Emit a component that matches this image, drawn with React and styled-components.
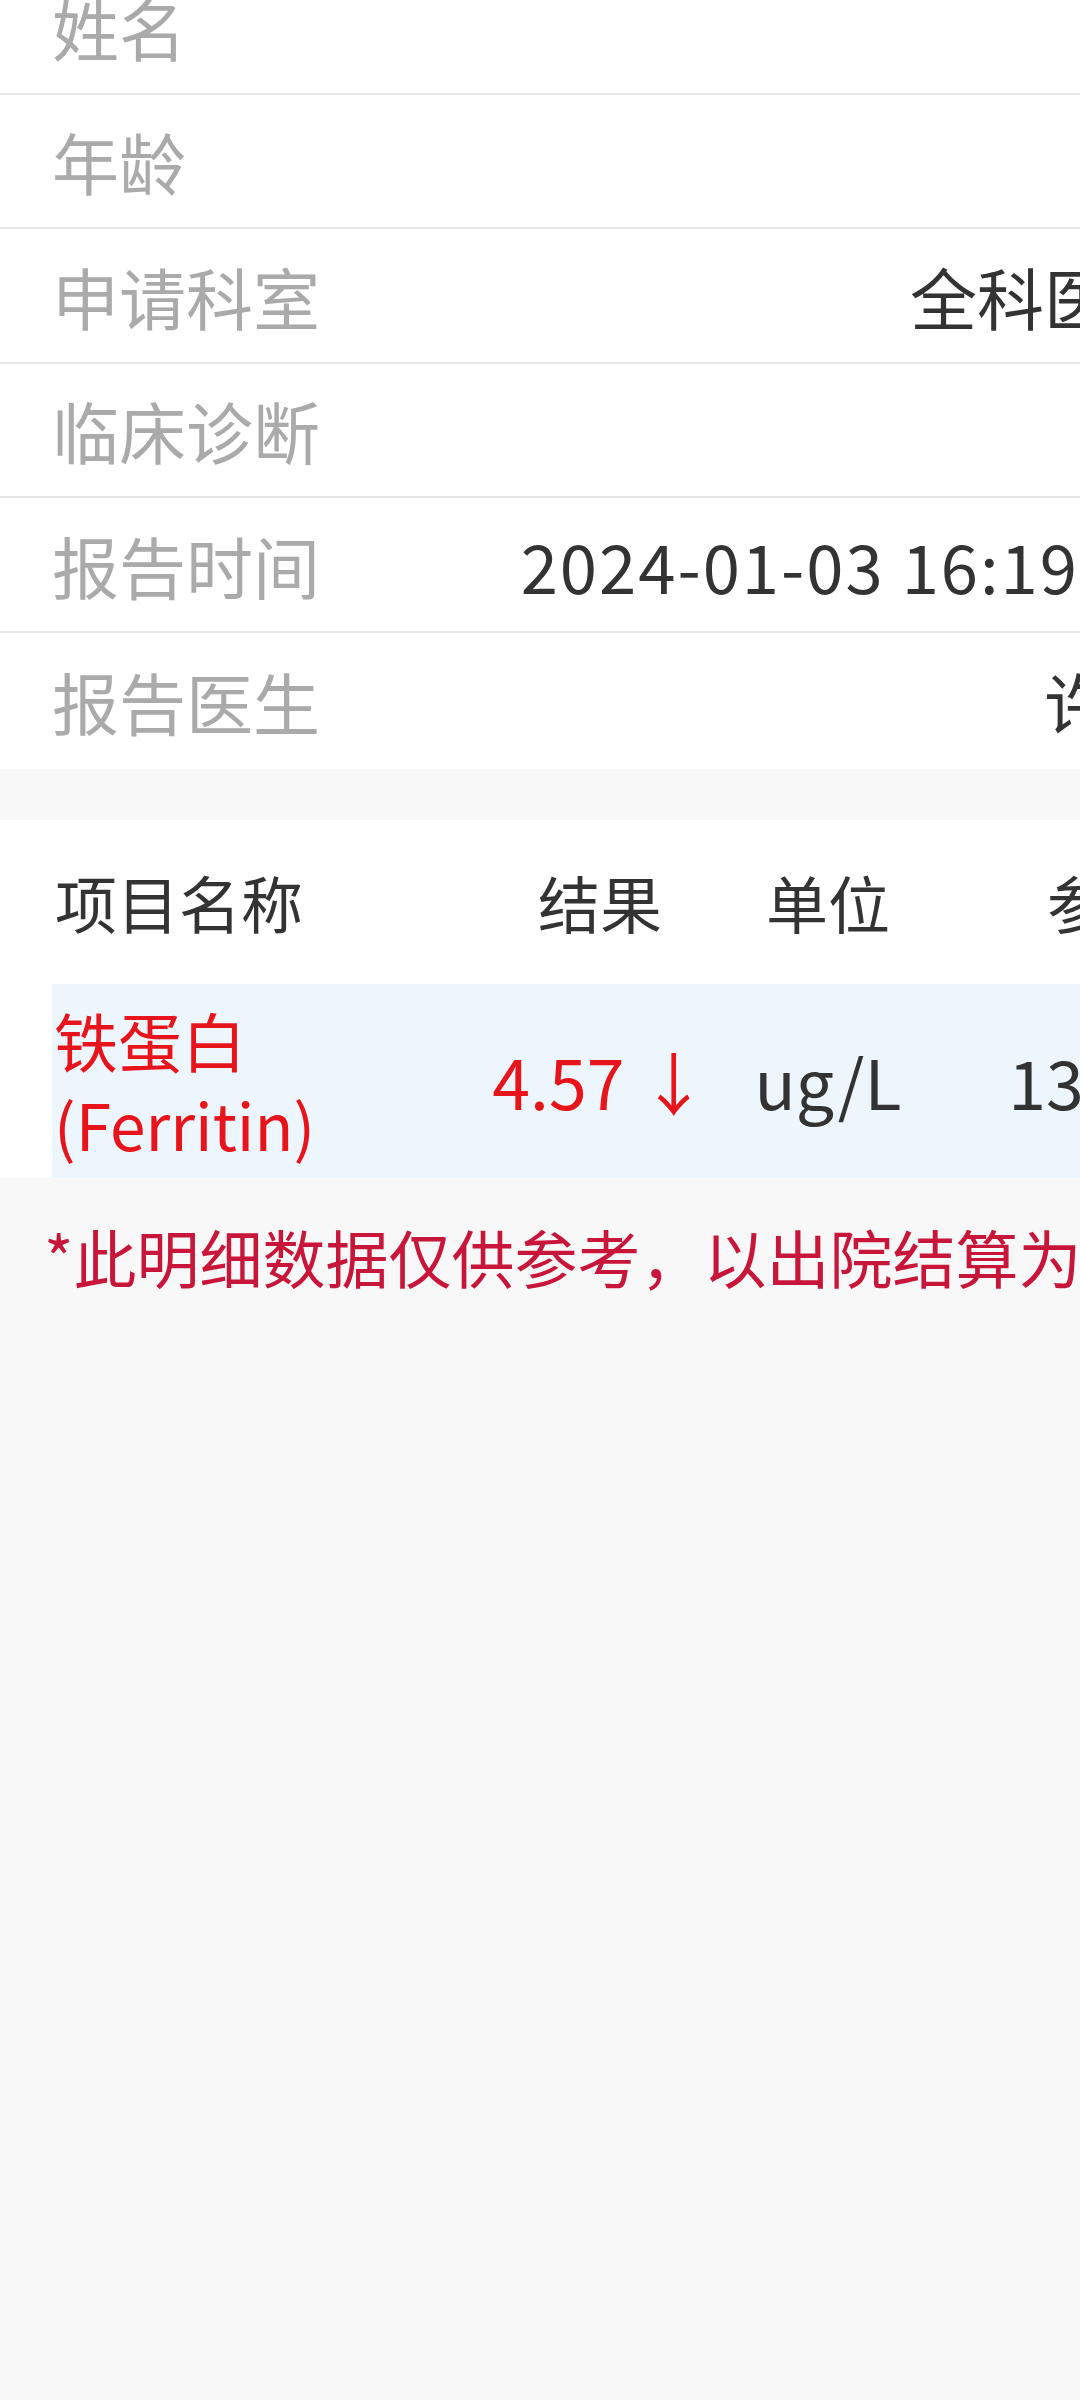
import React from "react";
import styled, { createGlobalStyle } from "styled-components";

const GlobalStyle = createGlobalStyle`
  html, body {
    margin: 0;
    padding: 0;
    background: #f8f8f8;
    overflow-x: hidden;
  }
  body {
    font-family: "Noto Sans CJK SC", "Noto Sans", sans-serif;
  }
`;

const info = [
  { label: "姓名", value: "" },
  { label: "年龄", value: "" },
  { label: "申请科室", value: "全科医学" },
  { label: "临床诊断", value: "" },
  { label: "报告时间", value: "2024-01-03 16:19:27", spaced: true },
  { label: "报告医生", value: "许敏" },
];

const items = [
  {
    name: "铁蛋白",
    en: "(Ferritin)",
    result: "4.57",
    flag: "↓",
    unit: "ug/L",
    range: "13.0-150.0",
  },
];

function App() {
  return (
    <>
      <GlobalStyle />
      <Page>
        <InfoList>
          {info.map((row) => (
            <InfoRow key={row.label}>
              <Label>{row.label}</Label>
              <Value $spaced={row.spaced}>{row.value}</Value>
            </InfoRow>
          ))}
        </InfoList>

        <Table>
          <HeadRow>
            <HeadCell $align="left">项目名称</HeadCell>
            <HeadCell>结果</HeadCell>
            <HeadCell>单位</HeadCell>
            <HeadCell>参考范围</HeadCell>
          </HeadRow>
          {items.map((item) => (
            <DataRow key={item.name}>
              <NameCell>
                <span>{item.name}</span>
                <span>{item.en}</span>
              </NameCell>
              <Cell $red>
                {item.result} {item.flag}
              </Cell>
              <Cell>{item.unit}</Cell>
              <Cell>{item.range}</Cell>
            </DataRow>
          ))}
        </Table>

        <Note>*此明细数据仅供参考，以出院结算为准。</Note>
      </Page>
    </>
  );
}

export default App;

const Page = styled.div`
  width: 1230px;
  margin-top: -40px;
  min-height: 2440px;
  background: #f8f8f8;
`;

const InfoList = styled.div`
  background: #fff;
  margin-bottom: 51px;
`;

const InfoRow = styled.div`
  height: 134.5px;
  box-sizing: border-box;
  display: flex;
  align-items: center;
  justify-content: space-between;
  padding: 0 52px;
  border-bottom: 2px solid #e6e6e6;

  &:last-child {
    height: 136px;
    border-bottom: none;
  }
`;

const Label = styled.span`
  font-size: 67px;
  color: #aaaaaa;
  white-space: nowrap;
`;

const Value = styled.span`
  font-size: 67px;
  color: #333333;
  white-space: nowrap;
  letter-spacing: ${(p) => (p.$spaced ? "2px" : "0")};
`;

const Table = styled.div`
  background: #fff;
  padding-left: 52px;
  width: 1500px;
`;

const columns = "418px 260px 196px 490px";

const HeadRow = styled.div`
  display: grid;
  grid-template-columns: ${columns};
  height: 164px;
  align-items: center;
`;

const HeadCell = styled.div`
  font-size: 62px;
  color: #333333;
  text-align: ${(p) => p.$align || "center"};
  padding-left: ${(p) => (p.$align === "left" ? "3px" : "0")};
  white-space: nowrap;
`;

const DataRow = styled.div`
  display: grid;
  grid-template-columns: ${columns};
  height: 194px;
  align-items: center;
  background: #eef6fd;
`;

const NameCell = styled.div`
  display: flex;
  flex-direction: column;
  padding-left: 2px;
  font-size: 64px;
  line-height: 84px;
  color: #e8141c;
  white-space: nowrap;
`;

const Cell = styled.div`
  font-size: 68px;
  color: ${(p) => (p.$red ? "#e8141c" : "#333333")};
  text-align: center;
  white-space: nowrap;
`;

const Note = styled.div`
  padding: 34px 0 0 44px;
  font-size: 63px;
  line-height: 88px;
  color: #c8163a;
  white-space: nowrap;
`;
